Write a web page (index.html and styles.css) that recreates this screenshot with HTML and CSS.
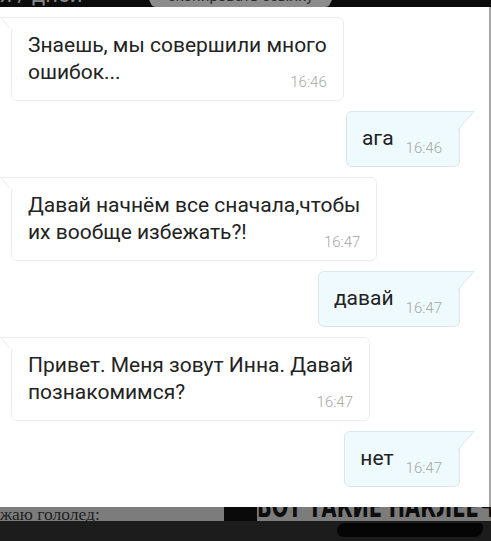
FILE: index.html
```html
<!DOCTYPE html>
<html lang="ru">
  <head>
    <meta charset="UTF-8" />
    <title>Чат</title>
    <link rel="stylesheet" href="styles.css">
  </head>
  <body>
    <div class="screen">
      <!-- cut off top of the screenshot -->
      <div class="topbar">
        <span class="top-title">я / дней</span>
        <span class="top-tab"><span>скопировать ссылку</span></span>
      </div>

      <div class="chat">
        <div class="bubble in">Знаешь, мы совершили много<br />ошибок...<span class="time">16:46</span></div>
        <div class="bubble out">ага<span class="time">16:46</span></div>
        <div class="bubble in">Давай начнём все сначала,чтобы<br />их вообще избежать?!<span class="time">16:47</span></div>
        <div class="bubble out">давай<span class="time">16:47</span></div>
        <div class="bubble in">Привет. Меня зовут Инна. Давай<br />познакомимся?<span class="time">16:47</span></div>
        <div class="bubble out">нет<span class="time">16:47</span></div>
      </div>

      <!-- cut off bottom of the screenshot -->
      <div class="strip">
        <span class="strip-text">жаю гололед:</span>
        <span class="strip-block"></span>
        <span class="strip-title">ВОТ ТАКИЕ НАКЛЕЕЧКИ</span>
      </div>
      <div class="footer">
        <span class="blob"></span>
      </div>
    </div>
  </body>
</html>
```

FILE: styles.css
```css
html,
body {
  margin: 0;
  padding: 0;
}

body {
  background: #1c1c1c;
  font-family: Roboto, 'Noto Sans', sans-serif;
  color: #222;
}

.screen {
  width: 491px;
  height: 541px;
  overflow: hidden;
}

/* top strip */
.topbar {
  display: flex;
  height: 7px;
  overflow: hidden;
  background: #0c0c0c;
}

.top-title {
  flex-shrink: 0;
  width: 149px;
  margin-top: -16px;
  font-size: 22px;
  line-height: 22px;
  color: #8a8a8a;
  white-space: nowrap;
}

.top-tab {
  flex-shrink: 0;
  width: 183px;
  height: 7px;
  background: #8c8c8c;
  border-radius: 0 0 8px 8px;
  clip-path: polygon(0 0, 100% 0, 98% 100%, 2% 100%);
  text-align: center;
  overflow: hidden;
}

.top-tab span {
  display: block;
  margin-top: -12px;
  font-size: 15px;
  line-height: 16px;
  color: #2a2a2a;
  white-space: nowrap;
}

/* chat */
.chat {
  display: flex;
  flex-direction: column;
  gap: 10px;
  box-sizing: border-box;
  height: 500px;
  width: 491px;
  padding: 10px 0 0;
  background: #fff;
  border-right: 2px solid #a8a8a8;
}

.bubble {
  position: relative;
  display: inline-block;
  padding: 14px 16px 9px;
  font-size: 21px;
  line-height: 27px;
  white-space: nowrap;
  border: 1px solid;
  border-radius: 6px;
}

.bubble::before,
.bubble::after {
  content: '';
  position: absolute;
}

.bubble.in {
  align-self: flex-start;
  margin-left: 11px;
  background: #fff;
  border-color: #ededed;
  border-top-left-radius: 0;
}

.bubble.in::before {
  top: -1px;
  left: -12px;
  width: 13px;
  height: 15px;
  background: #ededed;
  clip-path: polygon(0 0, 100% 0, 100% 100%);
}

.bubble.in::after {
  top: 0;
  left: -10px;
  width: 11px;
  height: 13px;
  background: #fff;
  clip-path: polygon(0 0, 100% 0, 100% 100%);
}

.bubble.out {
  align-self: flex-end;
  margin-right: 29px;
  padding: 13px 17px 9px 15px;
  background: #eefafd;
  border-color: #d9e8ec;
  border-top-right-radius: 0;
}

.bubble.out::before {
  top: -1px;
  right: -16px;
  width: 17px;
  height: 19px;
  background: #d9e8ec;
  clip-path: polygon(0 0, 100% 0, 0 100%);
}

.bubble.out::after {
  top: 0;
  right: -14px;
  width: 15px;
  height: 17px;
  background: #eefafd;
  clip-path: polygon(0 0, 100% 0, 0 100%);
}

.time {
  float: right;
  margin: 14px 0 0 12px;
  font-size: 15px;
  font-weight: 300;
  line-height: 18px;
  color: #a6a6a6;
}

/* bottom strip */
.strip {
  display: flex;
  height: 14px;
  overflow: hidden;
  background: #7c7c7c;
}

.strip-text {
  flex-shrink: 0;
  width: 224px;
  font-family: 'Liberation Serif', serif;
  font-size: 17.5px;
  line-height: 14px;
  color: #1e1e1e;
  white-space: nowrap;
}

.strip-block {
  flex-shrink: 0;
  width: 33px;
  background: #0a0a0a;
}

.strip-title {
  flex-shrink: 0;
  margin-top: -15px;
  font-family: 'DejaVu Sans Condensed', 'DejaVu Sans', sans-serif;
  font-stretch: condensed;
  font-weight: bold;
  font-size: 30px;
  line-height: 30px;
  color: #0d0d0d;
  white-space: nowrap;
  transform: scaleX(0.72);
  transform-origin: left top;
}

.footer {
  display: flex;
  height: 20px;
  background: #1c1c1c;
}

.blob {
  width: 146px;
  height: 14px;
  margin: 2px 0 0 337px;
  background: #050505;
  border-radius: 9px 4px 10px 7px;
}
```
